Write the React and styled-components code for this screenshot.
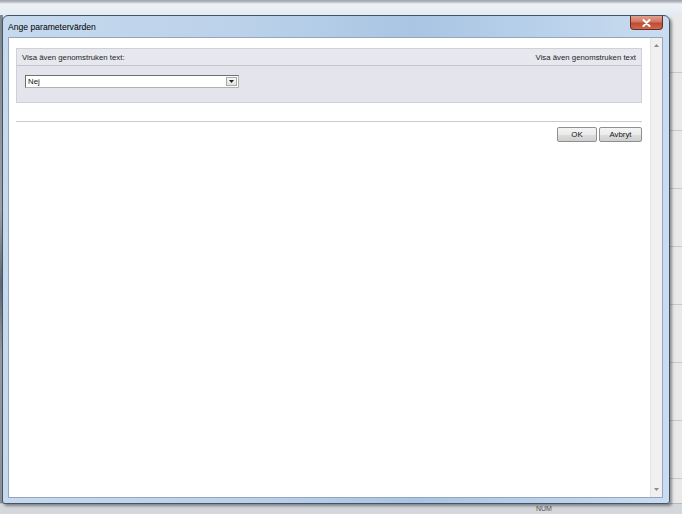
import React from 'react';
import styled, { createGlobalStyle } from 'styled-components';

const Global = createGlobalStyle`
  html, body { margin: 0; padding: 0; }
  body {
    width: 682px;
    height: 514px;
    overflow: hidden;
    background: #dfe2e6;
    font-family: "Liberation Sans", Arial, sans-serif;
  }
`;

const Desktop = styled.div`
  position: relative;
  width: 682px;
  height: 514px;
  overflow: hidden;
`;

const BackApp = styled.div`
  display: flex;
  flex-direction: column;
  width: 100%;
  height: 100%;
  background: #eceef0;
`;

const BackTop = styled.div`
  height: 15px;
  background: linear-gradient(to bottom, #9da3a9 0px, #b9bec3 2px, #eef2f6 4px, #e3ebf3 100%);
`;

const BackMiddle = styled.div`
  flex: 1;
  display: flex;
  justify-content: space-between;
`;

const BackLeft = styled.div`
  width: 3px;
  background: linear-gradient(to bottom, #7f868d, #9aa1a8 40%, #5f6770 55%, #939aa1 70%, #8a9096);
`;

const BackRight = styled.div`
  width: 12px;
  background: repeating-linear-gradient(to bottom, #e9e9e9 0px, #e9e9e9 57px, #c8c8c8 57px, #c8c8c8 58px);
`;

const BackStatus = styled.div`
  height: 10px;
  background: #d4d7db;
  border-top: 1px solid #b5b9be;
  display: flex;
  padding-left: 536px;
  font-size: 7px;
  line-height: 9px;
  color: #555;
`;

const Window = styled.div`
  position: absolute;
  left: 2px;
  top: 15px;
  width: 668px;
  height: 489px;
  box-sizing: border-box;
  border: 1px solid #43546a;
  border-radius: 6px 6px 3px 3px;
  background: linear-gradient(to right, #c6d9ed 0%, #bcd2ea 35%, #a9c5e3 62%, #b8d0ea 80%, #cadcef 100%);
  box-shadow: 2px 2px 3px rgba(0, 0, 0, 0.4);
  padding: 0 6px 5px 5px;
  display: flex;
  flex-direction: column;
`;

const TitleBar = styled.div`
  height: 21px;
  display: flex;
  align-items: flex-start;
`;

const Title = styled.div`
  font-family: "Liberation Sans", Arial, sans-serif;
  font-size: 8.6px;
  line-height: 10px;
  margin-top: 6px;
  color: #000;
`;

const CloseButton = styled.div`
  margin-left: auto;
  width: 33px;
  height: 14px;
  box-sizing: border-box;
  border: 1px solid #6e2a20;
  border-top: none;
  border-radius: 0 0 4px 4px;
  background: linear-gradient(to bottom, #e3a090 0%, #d27560 45%, #c04a33 55%, #cc6a52 100%);
  display: flex;
  align-items: center;
  justify-content: center;
`;

const Client = styled.div`
  flex: 1;
  display: flex;
  background: #fff;
  border: 1px solid #93a6bd;
  min-height: 0;
`;

const Content = styled.div`
  flex: 1;
  padding: 10px 8px 0 7px;
  display: flex;
  flex-direction: column;
`;

const Panel = styled.div`
  height: 55px;
  box-sizing: border-box;
  border: 1px solid #cfd0da;
  background: #e4e4ec;
  display: flex;
  flex-direction: column;
`;

const PanelHeader = styled.div`
  height: 17px;
  box-sizing: border-box;
  border-bottom: 1px solid #c4c5d1;
  background: #e7e7ee;
  display: flex;
  align-items: center;
  justify-content: space-between;
  padding: 0 5px;
  font-size: 7.8px;
  color: #1e1e1e;
`;

const PanelBody = styled.div`
  padding: 9px 8px 0 8px;
`;

const Select = styled.div`
  width: 214px;
  height: 13px;
  box-sizing: border-box;
  border: 1px solid #6f6f6f;
  border-right-color: #b0b0b0;
  border-bottom-color: #b0b0b0;
  background: #fff;
  display: flex;
  align-items: center;
  padding-left: 2px;
  font-size: 7.8px;
  color: #111;
`;

const SelectValue = styled.span`
  flex: 1;
`;

const SelectArrow = styled.div`
  width: 11px;
  height: 9px;
  margin-right: 1px;
  box-sizing: border-box;
  border: 1px solid #a8a8a8;
  background: linear-gradient(to bottom, #f6f6f6, #e2e2e2);
  display: flex;
  align-items: center;
  justify-content: center;
`;

const Rule = styled.div`
  margin-top: 18px;
  height: 1px;
  background: #cacaca;
`;

const ButtonRow = styled.div`
  display: flex;
  justify-content: flex-end;
  gap: 2px;
  margin-top: 5px;
`;

const Button = styled.div`
  width: ${p => p.$w}px;
  height: 15px;
  box-sizing: border-box;
  border: 1px solid #8e8f8f;
  border-radius: 2px;
  background: linear-gradient(to bottom, #f4f4f4 0%, #ebebeb 50%, #dddddd 51%, #cfcfcf 100%);
  display: flex;
  align-items: center;
  justify-content: center;
  font-size: 7.8px;
  color: #111;
`;

const Scrollbar = styled.div`
  width: 12px;
  box-sizing: border-box;
  background: #f0f0f0;
  border-left: 1px solid #e4e4e4;
  display: flex;
  flex-direction: column;
  justify-content: space-between;
  align-items: center;
  padding: 6px 0 6px;
`;

const Arrow = ({ down }) => (
  <svg width="5" height="3" viewBox="0 0 5 3">
    {down ? <polygon points="0,0 5,0 2.5,3" fill="#8a8a8a" /> : <polygon points="0,3 5,3 2.5,0" fill="#8a8a8a" />}
  </svg>
);

export default function App() {
  return (
    <Desktop>
      <Global />
      <BackApp>
        <BackTop />
        <BackMiddle>
          <BackLeft />
          <BackRight />
        </BackMiddle>
        <BackStatus>NUM</BackStatus>
      </BackApp>
      <Window>
        <TitleBar>
          <Title>Ange parametervärden</Title>
          <CloseButton>
            <svg width="9" height="8" viewBox="0 0 9 8">
              <path d="M1.5 1 L7.5 7 M7.5 1 L1.5 7" stroke="#fff" strokeWidth="2" strokeLinecap="round" />
            </svg>
          </CloseButton>
        </TitleBar>
        <Client>
          <Content>
            <Panel>
              <PanelHeader>
                <span>Visa även genomstruken text:</span>
                <span>Visa även genomstruken text</span>
              </PanelHeader>
              <PanelBody>
                <Select>
                  <SelectValue>Nej</SelectValue>
                  <SelectArrow>
                    <svg width="5" height="3" viewBox="0 0 5 3">
                      <polygon points="0,0 5,0 2.5,3" fill="#222" />
                    </svg>
                  </SelectArrow>
                </Select>
              </PanelBody>
            </Panel>
            <Rule />
            <ButtonRow>
              <Button $w={40}>OK</Button>
              <Button $w={43}>Avbryt</Button>
            </ButtonRow>
          </Content>
          <Scrollbar>
            <Arrow />
            <Arrow down />
          </Scrollbar>
        </Client>
      </Window>
    </Desktop>
  );
}
